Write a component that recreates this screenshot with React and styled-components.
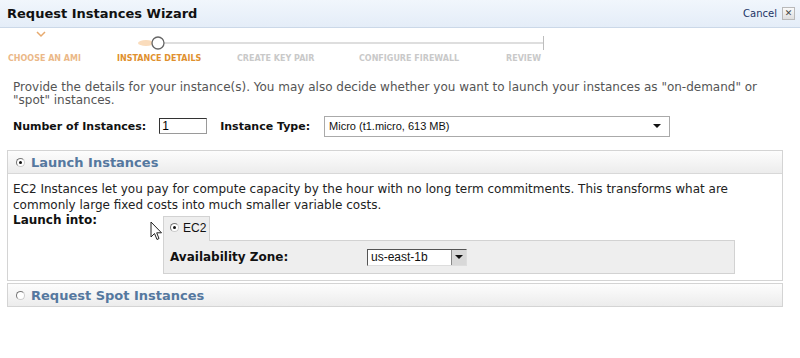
import React from "react";
import styled, { createGlobalStyle } from "styled-components";

const GlobalStyle = createGlobalStyle`
  body {
    margin: 0;
    background: #fff;
    font-family: "DejaVu Sans", Verdana, sans-serif;
  }
`;

const steps = [
  { label: "CHOOSE AN AMI", width: 109, state: "done" },
  { label: "INSTANCE DETAILS", width: 120, state: "current" },
  { label: "CREATE KEY PAIR", width: 122, state: "todo" },
  { label: "CONFIGURE FIREWALL", width: 147, state: "todo" },
  { label: "REVIEW", width: 60, state: "todo" },
];

const stepColors = { done: "#ebb888", current: "#e0902e", todo: "#c9c9c9" };

const Page = styled.div`
  width: 800px;
  height: 358px;
  position: relative;
  overflow: hidden;
`;

const Header = styled.div`
  height: 27px;
  display: flex;
  align-items: center;
  justify-content: space-between;
  padding: 0 5px 0 7px;
  background: linear-gradient(#f1f6fc, #e4edf8);
  border-bottom: 1px solid #cbd8e8;
`;

const Title = styled.div`
  font-weight: bold;
  font-size: 13px;
  color: #111;
`;

const Cancel = styled.div`
  display: flex;
  align-items: center;
  gap: 5px;
  font-size: 10px;
  color: #1d3566;
`;

const CloseBox = styled.span`
  width: 11px;
  height: 11px;
  border: 1px solid #b9b9b9;
  background: linear-gradient(#fafafa, #dedede);
  display: flex;
  align-items: center;
  justify-content: center;
  font-size: 9px;
  font-weight: bold;
  color: #444;
  line-height: 1;
`;

const Stepper = styled.div`
  height: 46px;
`;

const StepLabels = styled.div`
  display: flex;
  padding-left: 8px;
`;

const StepLabel = styled.div`
  width: ${(p) => p.$w}px;
  flex: none;
  font-size: 8px;
  font-weight: bold;
  color: ${(p) => stepColors[p.$state]};
  white-space: nowrap;
`;

const Intro = styled.p`
  margin: 7px 0 0;
  padding: 0 13px;
  font-size: 12px;
  line-height: 13px;
  color: #555;
`;

const FormRow = styled.div`
  display: flex;
  align-items: center;
  padding: 0 13px;
  margin-top: 8px;
  height: 22px;
`;

const Label = styled.span`
  font-weight: bold;
  font-size: 11px;
  color: #111;
  margin-right: ${(p) => p.$gap || 0}px;
  white-space: nowrap;
`;

const NumInput = styled.div`
  width: 44px;
  height: 14px;
  border: 1px solid #9a9a9a;
  border-top-color: #333;
  border-left-color: #333;
  padding: 0 0 0 2px;
  font-family: "Liberation Sans", Arial, sans-serif;
  font-size: 12px;
  line-height: 15px;
  margin-right: 13px;
`;

const TypeSelect = styled.div`
  height: 19px;
  border: 1px solid #aaa;
  display: flex;
  align-items: center;
  justify-content: space-between;
  padding: 0 8px 0 4px;
  font-family: "Liberation Sans", Arial, sans-serif;
  font-size: 11px;
  color: #111;
  width: 332px;
`;

const Caret = styled.span`
  width: 0;
  height: 0;
  border-left: 4px solid transparent;
  border-right: 4px solid transparent;
  border-top: 4px solid #111;
`;

const Panel = styled.div`
  margin: ${(p) => p.$top}px 17px 0 7px;
  border: 1px solid #d4d4d4;
`;

const PanelHead = styled.div`
  height: 22px;
  display: flex;
  align-items: center;
  padding-left: 8px;
  gap: 6px;
  background: linear-gradient(#fdfdfd, #ececec);
  border-bottom: ${(p) => (p.$open ? "1px solid #d8d8d8" : "none")};
  font-size: 13px;
  font-weight: bold;
  color: #55789f;
`;

const Radio = styled.span`
  width: 7px;
  height: 7px;
  border-radius: 50%;
  border: 1px solid #777;
  border-bottom-color: #ccc;
  border-right-color: #ccc;
  background: #fff;
  display: inline-flex;
  align-items: center;
  justify-content: center;
  flex: none;
  &::after {
    content: "";
    width: 3px;
    height: 3px;
    border-radius: 50%;
    background: ${(p) => (p.$on ? "#111" : "transparent")};
  }
`;

const PanelBody = styled.div`
  padding: 7px 5px 6px 5px;
  font-size: 12px;
  line-height: 16px;
  color: #222;
`;

const LaunchRow = styled.div`
  display: flex;
`;

const LaunchLabel = styled.div`
  width: ${(p) => p.$w || 150}px;
  flex: none;
  font-weight: bold;
  font-size: 12px;
  color: #111;
  line-height: 15px;
`;

const Tabs = styled.div`
  width: 572px;
  margin-top: 3px;
`;

const Tab = styled.div`
  width: 47px;
  height: 25px;
  display: flex;
  align-items: center;
  gap: 4px;
  padding-left: 6px;
  padding-bottom: 3px;
  box-sizing: border-box;
  background: #eee;
  border: 1px solid #d2d2d2;
  border-bottom: none;
  font-family: "Liberation Sans", Arial, sans-serif;
  font-size: 12px;
  color: #111;
  margin-bottom: -1px;
  position: relative;
  z-index: 1;
`;

const TabPanel = styled.div`
  height: 32px;
  background: #eee;
  border: 1px solid #d2d2d2;
  display: flex;
  align-items: center;
  padding-left: 6px;
`;

const ZoneSelect = styled.div`
  display: flex;
  width: 100px;
  height: 17px;
  box-sizing: border-box;
  border: 1px solid #ddd;
  border-top-color: #555;
  border-left-color: #555;
  background: #fff;
  font-family: "Liberation Sans", Arial, sans-serif;
  font-size: 12px;
  line-height: 15px;
  color: #111;
`;

const ZoneText = styled.span`
  flex: 1;
  padding-left: 3px;
`;

const ZoneButton = styled.span`
  width: 14px;
  background: #d8d8d8;
  border-left: 1px solid #888;
  display: flex;
  align-items: center;
  justify-content: center;
`;

const Cursor = styled.svg`
  position: absolute;
  left: 150px;
  top: 221px;
`;

export default function App() {
  return (
    <Page>
      <GlobalStyle />
      <Header>
        <Title>Request Instances Wizard</Title>
        <Cancel>
          Cancel <CloseBox>✕</CloseBox>
        </Cancel>
      </Header>

      <Stepper>
        <svg width="560" height="22" viewBox="0 0 560 22">
          <defs>
            <linearGradient id="done" x1="0" x2="1">
              <stop offset="0" stopColor="#f2d2b0" />
              <stop offset="0.8" stopColor="#ecbb8c" />
              <stop offset="1" stopColor="#f0a860" />
            </linearGradient>
          </defs>
          <polyline points="37,4 41,8 45,4" fill="none" stroke="#e7aa6e" strokeWidth="1.5" />
          <line x1="8" y1="15" x2="152" y2="15" stroke="url(#done)" strokeWidth="1.2" />
          <ellipse cx="146" cy="15" rx="8" ry="3" fill="#f6c48f" opacity="0.6" />
          <line x1="164" y1="15" x2="543" y2="15" stroke="#bdbdbd" strokeWidth="1" />
          <line x1="543.5" y1="8" x2="543.5" y2="22" stroke="#bdbdbd" strokeWidth="1" />
          <circle cx="158" cy="15" r="6" fill="#fff" stroke="#666" strokeWidth="1.3" />
        </svg>
        <StepLabels>
          {steps.map((s) => (
            <StepLabel key={s.label} $w={s.width} $state={s.state}>
              {s.label}
            </StepLabel>
          ))}
        </StepLabels>
      </Stepper>

      <Intro>
        Provide the details for your instance(s). You may also decide whether you want to launch your
        instances as "on-demand" or "spot" instances.
      </Intro>

      <FormRow>
        <Label $gap={13}>Number of Instances:</Label>
        <NumInput>1</NumInput>
        <Label $gap={14}>Instance Type:</Label>
        <TypeSelect>
          <span>Micro (t1.micro, 613 MB)</span>
          <Caret />
        </TypeSelect>
      </FormRow>

      <Panel $top={13}>
        <PanelHead $open>
          <Radio $on />
          Launch Instances
        </PanelHead>
        <PanelBody>
          EC2 Instances let you pay for compute capacity by the hour with no long term commitments. This
          transforms what are commonly large fixed costs into much smaller variable costs.
          <LaunchRow>
            <LaunchLabel>Launch into:</LaunchLabel>
            <Tabs>
              <Tab>
                <Radio $on />
                EC2
              </Tab>
              <TabPanel>
                <LaunchLabel as="span" $w={197}>
                  Availability Zone:
                </LaunchLabel>
                <ZoneSelect>
                  <ZoneText>us-east-1b</ZoneText>
                  <ZoneButton>
                    <Caret />
                  </ZoneButton>
                </ZoneSelect>
              </TabPanel>
            </Tabs>
          </LaunchRow>
        </PanelBody>
      </Panel>

      <Panel $top={2}>
        <PanelHead>
          <Radio />
          Request Spot Instances
        </PanelHead>
      </Panel>

      <Cursor width="14" height="22" viewBox="0 0 14 22">
        <path d="M1 1 L1 16 L4.5 12.5 L7 18.5 L9 17.5 L6.7 11.8 L11.5 11.8 Z" fill="#fff" stroke="#222" strokeWidth="1" />
      </Cursor>
    </Page>
  );
}
